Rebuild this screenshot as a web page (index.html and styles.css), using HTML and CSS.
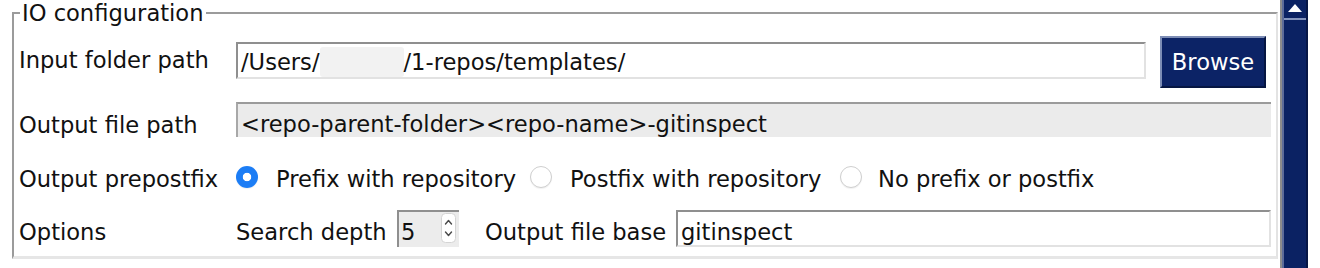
FILE: index.html
```html
<!DOCTYPE html>
<html lang="en">
<head>
<meta charset="utf-8">
<title>IO configuration</title>
<link rel="stylesheet" href="styles.css">
</head>
<body>
<div class="window">
  <div class="viewport">
    <fieldset class="group">
      <legend class="group-title">IO configuration</legend>

      <div class="row row-input">
        <div class="label">Input folder path</div>
        <div class="field field-input"><span>/Users/</span><span class="redacted"></span><span>/1-repos/templates/</span></div>
        <div class="button">Browse</div>
      </div>

      <div class="row row-output">
        <div class="label">Output file path</div>
        <div class="field field-readonly">&lt;repo-parent-folder&gt;&lt;repo-name&gt;-gitinspect</div>
      </div>

      <div class="row row-radio">
        <div class="label">Output prepostfix</div>
        <div class="opt opt-1"><span class="radio radio-on"></span><span>Prefix with repository</span></div>
        <div class="opt opt-2"><span class="radio"></span><span>Postfix with repository</span></div>
        <div class="opt opt-3"><span class="radio"></span><span>No prefix or postfix</span></div>
      </div>

      <div class="row row-options">
        <div class="label">Options</div>
        <div class="sublabel sublabel-depth">Search depth</div>
        <div class="spinner">
          <span class="spinner-value">5</span>
          <span class="stepper">
            <svg width="15" height="30" viewBox="0 0 15 30">
              <rect x="0.5" y="0.5" width="14" height="29" rx="4" fill="#ffffff" stroke="#d4d4d4"/>
              <path d="M4.5 11 L7.5 7.5 L10.5 11" fill="none" stroke="#4a4a4a" stroke-width="1.4" stroke-linecap="round" stroke-linejoin="round"/>
              <path d="M4.5 19 L7.5 22.5 L10.5 19" fill="none" stroke="#4a4a4a" stroke-width="1.4" stroke-linecap="round" stroke-linejoin="round"/>
            </svg>
          </span>
        </div>
        <div class="sublabel sublabel-base">Output file base</div>
        <div class="field field-base">gitinspect</div>
      </div>
    </fieldset>
  </div>
  <div class="pane-edge"></div>
  <div class="scrollbar">
    <div class="sb-up">
      <svg width="14" height="8" viewBox="0 0 14 8"><polygon points="7,0 14,8 0,8" fill="#ffffff"/></svg>
    </div>
    <div class="sb-track"></div>
  </div>
  <div class="filler"></div>
</div>
</body>
</html>
```

FILE: styles.css
```css
html, body {
  margin: 0;
  padding: 0;
  background: #ffffff;
  overflow: hidden;
}

body {
  font-family: "DejaVu Sans", "Liberation Sans", sans-serif;
  font-size: 22.6px;
  line-height: 26px;
  color: #111111;
}

.window {
  display: flex;
  width: 1320px;
  height: 268px;
}

.viewport {
  flex: none;
  width: 1280px;
  height: 268px;
}

.group {
  box-sizing: border-box;
  width: 1266px;
  min-width: 0;
  margin: 0 2px 0 12px;
  padding: 0 5px 8px 5px;
  border-style: solid;
  border-width: 2px 2px 3px 2px;
  border-color: #9b9b9b #e3e3e3 #e6e6e6 #9b9b9b;
}

.group-title {
  margin-left: 1px;
  padding: 0 2px;
  font-size: 22.6px;
  line-height: 26px;
}

.row {
  display: flex;
  align-items: flex-start;
}

.label {
  flex: none;
  width: 217px;
  white-space: nowrap;
}

.field {
  box-sizing: border-box;
  flex: 1;
  min-width: 0;
  white-space: nowrap;
  overflow: hidden;
  padding-left: 3px;
}

/* Row 1 */
.row-input {
  margin-top: 10px;
  height: 52px;
  padding-right: 5px;
}
.row-input .label {
  margin-top: 11px;
}
.field-input {
  margin-top: 6px;
  height: 37px;
  padding-top: 3px;
  border-style: solid;
  border-width: 2px;
  border-color: #8f8f8f #e2e2e2 #e2e2e2 #8f8f8f;
  background: #ffffff;
}
.redacted {
  display: inline-block;
  width: 84px;
  height: 30px;
  vertical-align: -7px;
  background: #f2f2f2;
  border-radius: 3px;
}
.button {
  box-sizing: border-box;
  flex: none;
  width: 106px;
  height: 52px;
  margin-left: 14px;
  display: flex;
  align-items: center;
  justify-content: center;
  background: #0c2366;
  color: #ffffff;
  border-style: solid;
  border-width: 2px;
  border-color: #7d8db5 #061642 #061642 #7d8db5;
}

/* Row 2 */
.row-output {
  margin-top: 14px;
  height: 35px;
}
.row-output .label {
  margin-top: 10px;
}
.field-readonly {
  height: 35px;
  padding-top: 7px;
  background: #ebebeb;
  border-top: 2px solid #9b9b9b;
  border-left: 2px solid #a8a8a8;
}

/* Row 3 */
.row-radio {
  margin-top: 28px;
  height: 26px;
  align-items: center;
}
.row-radio .label,
.opt span:last-child {
  position: relative;
  top: 1px;
}
.opt {
  flex: none;
  display: flex;
  align-items: center;
  white-space: nowrap;
}
.opt-1 { width: 294px; }
.opt-2 { width: 310px; }
.radio {
  box-sizing: border-box;
  flex: none;
  width: 22px;
  height: 22px;
  margin-right: 18px;
  border-radius: 50%;
  background: #ffffff;
  border: 1px solid #cfcfcf;
  box-shadow: 0 1px 1px rgba(0, 0, 0, 0.06);
  margin-top: -2px;
}
.opt-3 .radio {
  margin-right: 16px;
}
.radio-on {
  border: none;
  background: radial-gradient(circle, #ffffff 0 3.8px, #1c7df5 4.6px);
}

/* Row 4 */
.row-options {
  margin-top: 19px;
  height: 38px;
}
.row-options .label {
  margin-top: 9px;
}
.sublabel {
  flex: none;
  margin-top: 9px;
  white-space: nowrap;
}
.sublabel-depth {
  width: 161px;
}
.sublabel-base {
  width: 191px;
  margin-left: 26px;
}
.spinner {
  box-sizing: border-box;
  flex: none;
  width: 62px;
  height: 37px;
  display: flex;
  align-items: flex-start;
  background: #ececec;
  border-top: 2px solid #8f8f8f;
  border-left: 2px solid #8f8f8f;
}
.spinner-value {
  margin-top: 7px;
  padding-left: 2px;
}
.stepper {
  display: block;
  margin: 1px 3px 0 auto;
  height: 30px;
}
.stepper svg {
  display: block;
}
.field-base {
  height: 37px;
  padding-top: 7px;
  border-style: solid;
  border-width: 2px;
  border-color: #8f8f8f #e2e2e2 #e2e2e2 #8f8f8f;
  background: #ffffff;
}

/* Scroll pane */
.pane-edge {
  flex: none;
  width: 2px;
  height: 268px;
  background: #8c8c8c;
}
.scrollbar {
  box-sizing: border-box;
  flex: none;
  width: 26px;
  height: 268px;
  display: flex;
  flex-direction: column;
  background: #0b2263;
  border-left: 2px solid #5d6c99;
  border-right: 2px solid #071746;
}
.sb-up {
  flex: none;
  height: 18px;
  display: flex;
  align-items: center;
  justify-content: center;
  border-bottom: 2px solid #8595bd;
}
.sb-up svg {
  display: block;
  margin-top: -2px;
}
.sb-track {
  flex: 1;
}
.filler {
  flex: 1;
}
```
